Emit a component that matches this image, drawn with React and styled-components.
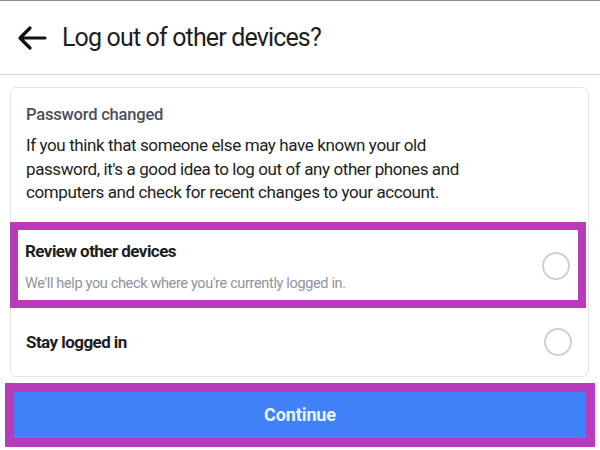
import styled, { createGlobalStyle } from 'styled-components';

const GlobalStyle = createGlobalStyle`
    html, body {
        margin: 0;
        padding: 0;
        background: #ffffff;
    }
    body {
        font-family: Roboto, "Liberation Sans", Arial, sans-serif;
        color: #1c1e21;
    }
`;

const Page = styled.div`
    width: 600px;
    height: 450px;
    overflow: hidden;
    border-top: 1.5px solid #8d8d8d;
    box-sizing: border-box;
`;

const Header = styled.header`
    height: 73px;
    display: flex;
    align-items: center;
    gap: 11px;
    padding: 0 0 0 17px;
    border-bottom: 1.5px solid #d4d4d4;
`;

const BackButton = styled.button`
    width: 34px;
    height: 32px;
    display: flex;
    align-items: center;
    justify-content: flex-start;
    padding: 0;
    background: none;
    border: none;
    color: #111111;
`;

const Title = styled.h1`
    margin: 0;
    font-size: 25px;
    font-weight: 400;
    color: #1c1e21;
    letter-spacing: -0.85px;
`;

const Card = styled.section`
    margin: 12px 11px 0 10px;
    border: 1px solid #e6e6e6;
    border-radius: 6px;
    background: #ffffff;
    display: flex;
    flex-direction: column;
`;

const Info = styled.div`
    padding: 17px 15px 17px 15px;
`;

const InfoTitle = styled.h2`
    margin: 0 0 10px;
    font-size: 16.5px;
    font-weight: 500;
    letter-spacing: -0.2px;
    color: #4b4f56;
`;

const InfoText = styled.p`
    margin: 0;
    max-width: 455px;
    font-size: 17px;
    line-height: 23.5px;
    letter-spacing: -0.4px;
    color: #1c1e21;
`;

const OptionRow = styled.label`
    display: flex;
    align-items: center;
    justify-content: space-between;
    min-height: ${({ $tall }) => ($tall ? '86px' : '68px')};
    padding: ${({ $tall }) => ($tall ? '3px 16px 0 15px' : '0 16px 0 15px')};
    margin: ${({ $highlight }) => ($highlight ? '0 2px 0 -1px' : '0')};
    box-sizing: border-box;
    box-shadow: ${({ $highlight }) => ($highlight ? 'inset 0 0 0 8px #b83cb9' : 'none')};
`;

const OptionText = styled.div`
    display: flex;
    flex-direction: column;
    gap: 14px;
`;

const OptionTitle = styled.span`
    font-size: 17px;
    font-weight: 700;
    letter-spacing: -0.55px;
    color: #1c1e21;
`;

const OptionHint = styled.span`
    font-size: 14.5px;
    letter-spacing: -0.35px;
    color: #90949c;
`;

const Radio = styled.span`
    width: 24px;
    height: 24px;
    border: 2px solid #d0d0d0;
    border-radius: 50%;
    flex-shrink: 0;
`;

const ButtonFrame = styled.div`
    margin: 6px 5px 0;
    border: 9px solid #b83cb9;
`;

const ContinueButton = styled.button`
    display: block;
    width: 100%;
    height: 46px;
    border: none;
    background: #4080f8;
    color: #eef4ff;
    font-family: Roboto, "Liberation Sans", Arial, sans-serif;
    font-size: 18px;
    font-weight: 700;
    letter-spacing: -0.1px;
`;

const BackArrow = () => (
    <svg width="30" height="26" viewBox="0 0 30 26" fill="none">
        <path d="M28 13H4M13 3L3 13l10 10" stroke="currentColor" strokeWidth="3.2" strokeLinecap="round" strokeLinejoin="round" />
    </svg>
);

const App = () => {
    return (
        <>
            <GlobalStyle />
            <Page>
                <Header>
                    <BackButton aria-label="Back">
                        <BackArrow />
                    </BackButton>
                    <Title>Log out of other devices?</Title>
                </Header>
                <Card>
                    <Info>
                        <InfoTitle>Password changed</InfoTitle>
                        <InfoText>
                            If you think that someone else may have known your old password, it's a good idea to log out of any other phones and computers and check for recent changes to your account.
                        </InfoText>
                    </Info>
                    <OptionRow $highlight $tall>
                        <OptionText>
                            <OptionTitle>Review other devices</OptionTitle>
                            <OptionHint>We'll help you check where you're currently logged in.</OptionHint>
                        </OptionText>
                        <Radio />
                    </OptionRow>
                    <OptionRow>
                        <OptionText>
                            <OptionTitle>Stay logged in</OptionTitle>
                        </OptionText>
                        <Radio />
                    </OptionRow>
                </Card>
                <ButtonFrame>
                    <ContinueButton>Continue</ContinueButton>
                </ButtonFrame>
            </Page>
        </>
    );
};

export default App;
